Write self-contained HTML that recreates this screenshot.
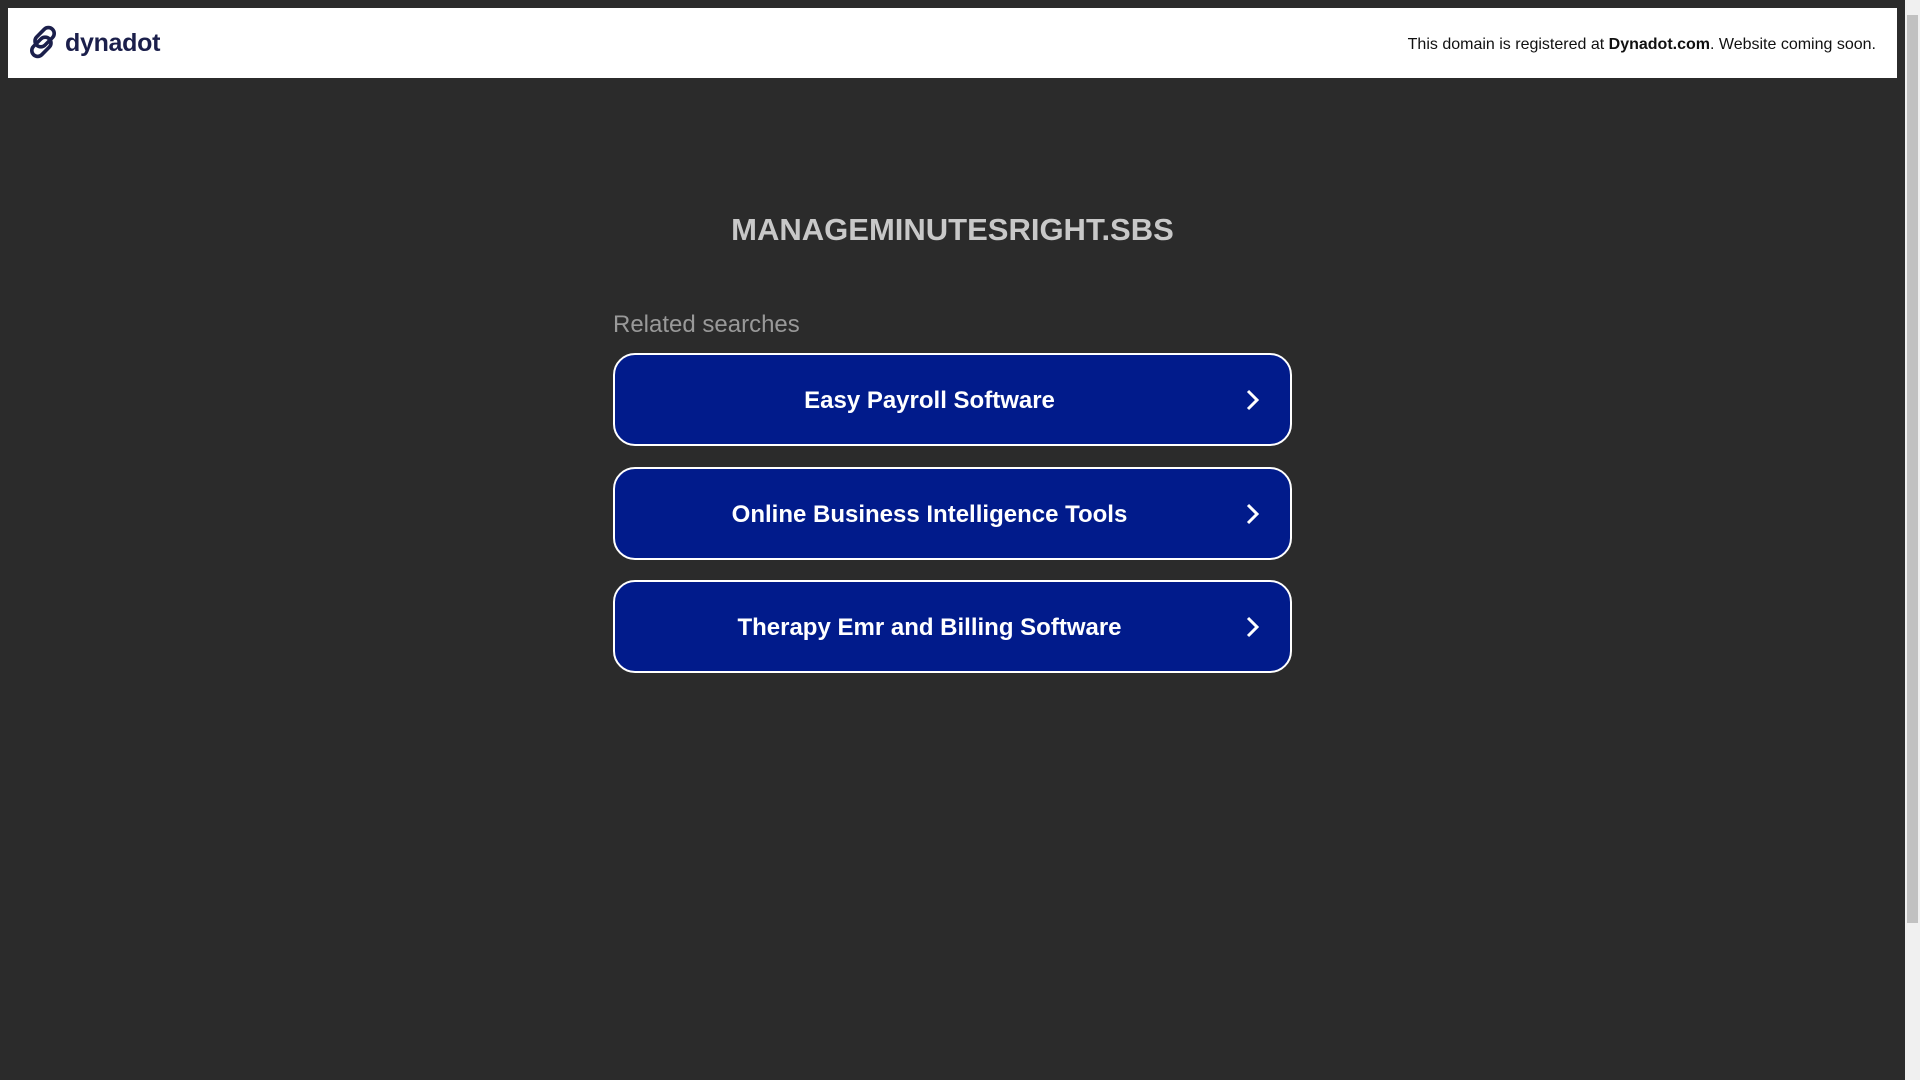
<!DOCTYPE html>
<html><head><meta charset="utf-8"><style>
html,body{margin:0;padding:0;}
body{width:1920px;height:1080px;background:#2b2b2b;position:relative;overflow:hidden;font-family:"Liberation Sans",sans-serif;}
.hdr{position:absolute;left:8px;top:8px;width:1889px;height:70px;background:#fff;}
.logo{position:absolute;left:26px;top:25px;}
.logotxt{position:absolute;left:65px;top:27px;font-size:25px;font-weight:bold;color:#1b1f4b;letter-spacing:-0.3px;line-height:32px;}
.reg{position:absolute;right:44px;top:35px;font-size:16px;color:#111;line-height:20px;}
.title{position:absolute;left:0;width:1905px;text-align:center;top:211px;font-size:31px;font-weight:bold;color:#c8c8c8;line-height:38px;}
.rel{position:absolute;left:613px;top:310px;font-size:24px;color:#999;line-height:30px;}
.btn{position:absolute;left:613px;width:675px;height:89px;border:2px solid #fff;border-radius:22px;background:#011b8b;}
.btn span{position:absolute;left:0;right:46px;top:2px;line-height:88px;text-align:center;color:#fff;font-size:24px;font-weight:bold;}
.btn svg{position:absolute;left:630px;top:34px;}
.sb{position:absolute;left:1905px;top:0;width:15px;height:1080px;background:#f0f0f0;}
.th{position:absolute;left:1907px;top:15px;width:11px;height:908px;background:#c1c1c1;}
</style></head><body>
<div class="hdr"></div>
<svg class="logo" width="34" height="34" viewBox="0 0 32 32">
<g fill="none" stroke="#1b1f4b" stroke-width="3.4">
<rect x="12" y="1" width="11" height="21" rx="5.5" transform="rotate(45 17.5 11.5)"/>
<rect x="9" y="10" width="11" height="21" rx="5.5" transform="rotate(45 14.5 20.5)"/>
</g></svg>
<div class="logotxt">dynadot</div>
<div class="reg">This domain is registered at <b>Dynadot.com</b>. Website coming soon.</div>
<div class="title">MANAGEMINUTESRIGHT.SBS</div>
<div class="rel">Related searches</div>
<div class="btn" style="top:353px"><span>Easy Payroll Software</span><svg width="14" height="22" viewBox="0 0 14 22"><path d="M3 2l9 9-9 9" fill="none" stroke="#fff" stroke-width="3"/></svg></div>
<div class="btn" style="top:467px"><span>Online Business Intelligence Tools</span><svg width="14" height="22" viewBox="0 0 14 22"><path d="M3 2l9 9-9 9" fill="none" stroke="#fff" stroke-width="3"/></svg></div>
<div class="btn" style="top:580px"><span>Therapy Emr and Billing Software</span><svg width="14" height="22" viewBox="0 0 14 22"><path d="M3 2l9 9-9 9" fill="none" stroke="#fff" stroke-width="3"/></svg></div>
<div class="sb"></div><div class="th"></div>
</body></html>
